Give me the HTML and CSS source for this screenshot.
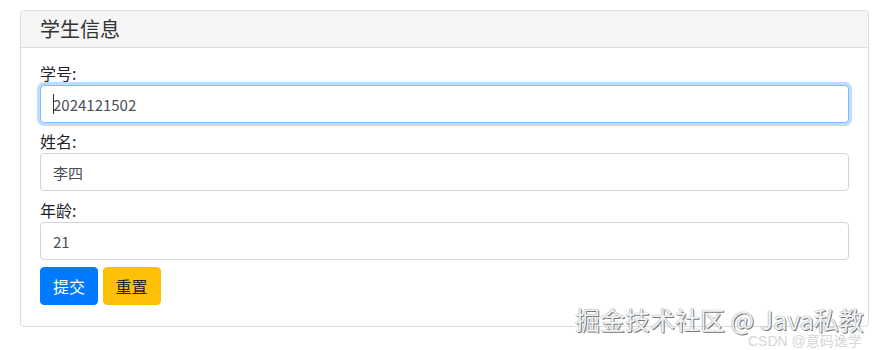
FILE: index.html
```html
<!DOCTYPE html>
<html lang="zh-CN">
<head>
    <meta charset="utf-8">
    <title>学生信息</title>
    <link rel="stylesheet" href="styles.css">
</head>
<body>
<div class="panel">
    <div class="panel_heading">学生信息</div>
    <div class="panel_body">
        <form>
            <div class="form_group">
                <label>学号:</label>
                <div class="input_wrap">
                    <input class="form_control is_focus" type="text" value="2024121502">
                    <span class="caret"></span>
                </div>
            </div>
            <div class="form_group">
                <label>姓名:</label>
                <input class="form_control" type="text" value="李四">
            </div>
            <div class="form_group form_group_last">
                <label>年龄:</label>
                <input class="form_control" type="text" value="21">
            </div>
            <div class="btns">
                <button type="button" class="btn btn_primary">提交</button>
                <button type="button" class="btn btn_warning">重置</button>
            </div>
        </form>
    </div>
</div>

<div class="mark">掘金技术社区 @ Java私教</div>
<div class="mark_small">CSDN @意码逸学</div>
</body>
</html>
```

FILE: styles.css
```css
body {
    margin: 0;
    background: #fff;
    font-family: "Noto Sans CJK SC", "Noto Sans", sans-serif;
    font-size: 16px;
    color: #212529;
    position: relative;
    height: 350px;
    overflow: hidden;
}

.panel {
    margin: 10px 12px 0 20px;
    border: 1px solid #ddd;
    border-radius: 4px;
    background: #fff;
}

.panel_heading {
    background: #f5f5f5;
    border-bottom: 1px solid #ddd;
    border-radius: 4px 4px 0 0;
    padding: 5px 19px;
    height: 26px;
    line-height: 26px;
    font-size: 20px;
    color: #333;
}

.panel_body {
    padding: 13px 19px 21px 19px;
}

.form_group {
    margin-bottom: 6px;
}

.form_group_last {
    padding-top: 1px;
}

.form_group label {
    display: block;
    height: 24px;
    line-height: 24px;
    font-size: 16px;
}

.input_wrap {
    position: relative;
}

.form_control {
    display: block;
    box-sizing: border-box;
    width: 100%;
    height: 38px;
    margin: 0;
    padding: 6px 12px;
    border: 1px solid #ced4da;
    border-radius: 4px;
    font-family: "Noto Sans CJK SC", "Noto Sans", sans-serif;
    font-size: 15px;
    color: #495057;
    background: #fff;
    outline: none;
}

.is_focus {
    border-color: #80bdff;
    box-shadow: 0 0 0 3px rgba(0, 123, 255, 0.25);
}

.caret {
    position: absolute;
    left: 13px;
    top: 9px;
    width: 1px;
    height: 20px;
    background: #333;
}

.btns {
    padding-top: 1px;
}

.btn {
    display: inline-block;
    box-sizing: border-box;
    height: 38px;
    padding: 0 12px;
    border: 1px solid transparent;
    border-radius: 4px;
    font-family: "Noto Sans CJK SC", "Noto Sans", sans-serif;
    font-size: 16px;
    line-height: 36px;
    cursor: pointer;
}

.btn + .btn {
    margin-left: 1px;
}

.btn_primary {
    background: #007bff;
    border-color: #007bff;
    color: #fff;
}

.btn_warning {
    background: #ffc107;
    border-color: #ffc107;
    color: #212529;
}

.mark {
    position: absolute;
    left: 575px;
    top: 304px;
    font-size: 25px;
    line-height: 30px;
    color: #f2f2f2;
    text-shadow: 1px 1px 0 #777, 0 0 1px #666;
    white-space: nowrap;
}

.mark_small {
    position: absolute;
    left: 748px;
    top: 333px;
    font-family: "Liberation Sans", "Noto Sans CJK SC", sans-serif;
    font-size: 14px;
    line-height: 16px;
    color: #d6d6d6;
    white-space: nowrap;
}
```
